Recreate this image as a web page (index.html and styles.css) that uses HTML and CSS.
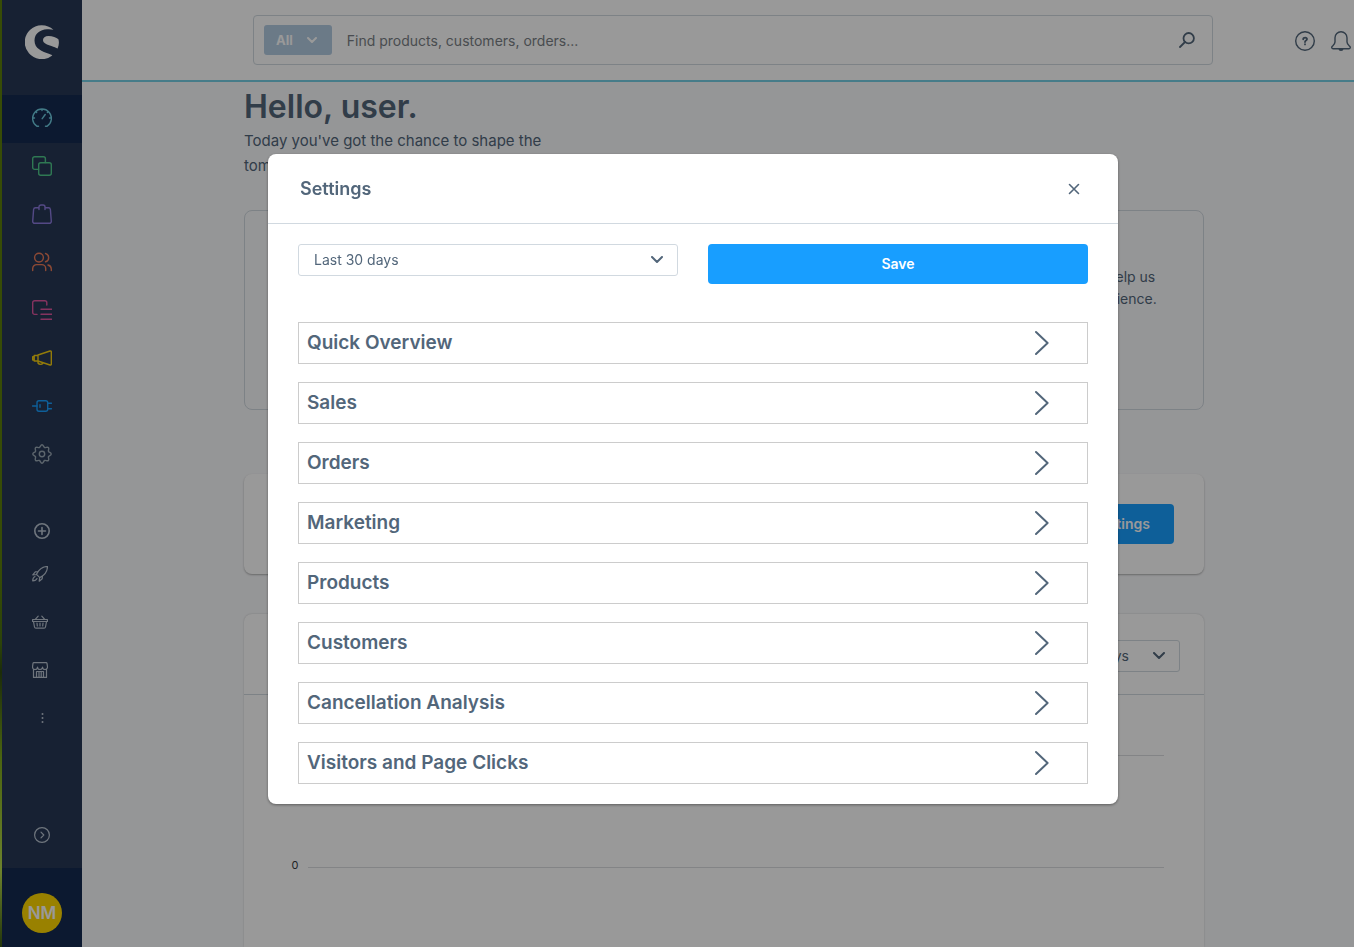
FILE: index.html
```
<!DOCTYPE html>
<html lang="en">
<head>
<meta charset="utf-8">
<title>Dashboard</title>
<link rel="stylesheet" href="styles.css">
</head>
<body>
<div class="app">
  <aside class="sidebar">
    <div class="brand">
      <svg width="34" height="34" viewBox="0 0 34 34"><path d="M28.400 4.800A17 17 0 1 0 27.300 30.500C27 30 26.200 29.700 24.500 29C17 26.500 9.500 23.500 9.500 15.500C9.500 8.500 15 4.800 22 4.300C24.500 4.100 26.700 4.300 28.400 4.800Z"/><path d="M33.400 14.200C31.300 12.300 27.600 10.900 23.500 10.900C20 10.900 18 12.600 18 15C18 18.600 22.500 19.600 26.400 20.900C29 21.800 31 22.600 32.600 23.500C34 20.500 34.300 17.400 33.400 14.200Z"/></svg>
    </div>
    <nav class="nav" aria-label="Main">
      <a class="nav-item active" href="#" aria-label="Dashboard"><svg class="icon cyan" viewBox="0 0 20 20"><path d="M6.500 18.200H4.800A9.400 9.400 0 1 1 15.200 18.200H13.500M10.200 10.700L13.200 6.500M10 1v1.500M1 10h1.500M19 10h-1.500M3.600 3.600l1 1M16.400 3.600l-1 1"/></svg></a>
      <a class="nav-item" href="#" aria-label="Catalogues"><svg class="icon green" viewBox="0 0 20 20"><path d="M6.500 13.400H2.700a2 2 0 0 1-2-2V2.700a2 2 0 0 1 2-2h8.700a2 2 0 0 1 2 2v3.800"/><rect x="6.700" y="6.700" width="12.600" height="12.600" rx="2"/></svg></a>
      <a class="nav-item" href="#" aria-label="Orders"><svg class="icon purple" viewBox="0 0 20 20"><path d="M7 3.700H3.600a2 2 0 0 0-2 1.800L.7 17.200a2 2 0 0 0 2 2.100h14.600a2 2 0 0 0 2-2.100L18.400 5.500a2 2 0 0 0-2-1.800H13M7 5.500V3a2 2 0 0 1 2-2h2a2 2 0 0 1 2 2v2.500"/></svg></a>
      <a class="nav-item" href="#" aria-label="Customers"><svg class="icon coral" viewBox="0 0 20 20"><circle cx="7" cy="5.600" r="4.400"/><path d="M.7 18.600v-2a4 4 0 0 1 4-4h5a4 4 0 0 1 4 4v2M13.500 1.500a4.300 4.300 0 0 1 0 8.300M16 13a4.200 4.200 0 0 1 3.300 4v1.600"/></svg></a>
      <a class="nav-item" href="#" aria-label="Content"><svg class="icon pink" viewBox="0 0 20 20"><path d="M5 14.400H2.700a2 2 0 0 1-2-2V2.700a2 2 0 0 1 2-2h10.100a2 2 0 0 1 2 2V5M9 9.300h11M9 14.300h11M9 19.300h11"/></svg></a>
      <a class="nav-item" href="#" aria-label="Marketing"><svg class="icon yellow" viewBox="0 0 20 20"><path d="M6 7L18 3a1 1 0 0 1 1.300 1v12a1 1 0 0 1-1.300 1L6 13zM6 7.500H2.200V13H6M2 8.700H.7v3.300H2M6 13v2a3 3 0 0 0 5 0"/></svg></a>
      <a class="nav-item" href="#" aria-label="Extensions"><svg class="icon blue" viewBox="0 0 20 20"><path d="M.5 10H5M8 8.800v2.400M15.800 7.300h3.700M15.800 12.700h3.700"/><rect x="5" y="4.700" width="10.700" height="10.600" rx="2"/></svg></a>
      <a class="nav-item" href="#" aria-label="Settings"><svg class="icon grey" viewBox="0 0 20 20"><path d="M10 .8c1.500 0 1.400 2.200 2.600 2.700s2.700-1 3.800.1-.4 2.600.1 3.800 2.700 1.100 2.700 2.600-2.200 1.400-2.700 2.600 1 2.700-.1 3.800-2.600-.4-3.800.1-1.100 2.700-2.600 2.700-1.400-2.200-2.600-2.700-2.700 1-3.800-.1.400-2.600-.1-3.800S.8 11.500.8 10s2.200-1.400 2.700-2.600-1-2.700.1-3.800 2.600.4 3.800-.1S8.500.8 10 .8z"/><circle cx="10" cy="10" r="2.700"/></svg></a>
    </nav>
    <nav class="shop-nav" aria-label="Sales channels">
      <button class="shop-item first" aria-label="Add sales channel"><svg class="icon-s bold" viewBox="0 0 16 16"><circle cx="8" cy="8" r="7.200"/><path d="M8 4.500v7M4.500 8h7"/></svg></button>
      <a class="shop-item shifted" href="#" aria-label="Launch"><svg class="icon-s" viewBox="0 0 16 16"><path d="M15.500.5C10.500.6 7 3 4.500 8.300L7.800 11.600C13 9 15.400 5.500 15.500.5zM6 5.500L3.300 5.800.8 8.900l3.700-.4M10.500 10l-.3 2.700-3 2.500.5-3.700M3 10.500c-1.500.6-2.200 2-2.300 4.300 2.300 0 3.700-.8 4.300-2.200"/></svg></a>
      <a class="shop-item shifted" href="#" aria-label="Storefront"><svg class="icon-s" viewBox="0 0 16 16"><path d="M.6 5.500h14.800v2H.6zM1.500 7.500l1 5.500a1.500 1.500 0 0 0 1.500 1.200h8a1.500 1.500 0 0 0 1.500-1.200l1-5.500M3.300 5.300L6.200 2.200M12.700 5.300L9.800 2.200M5 9l.3 3M8 9v3M11 9l-.3 3"/></svg></a>
      <a class="shop-item shifted" href="#" aria-label="Market"><svg class="icon-s" viewBox="0 0 16 16"><path d="M1.500 7v8.400h13V7M2 .6h12a1 1 0 0 1 1 .8l.5 3.600a2.500 2.500 0 0 1-5 0 2.500 2.500 0 0 1-5 0 2.500 2.500 0 0 1-5 0L1 1.400A1 1 0 0 1 2 .6zM4.500 15V9.500h7V15M7 9.500V15M9.200 9.500V15"/></svg></a>
      <button class="shop-item" aria-label="More"><svg class="icon-s dots" viewBox="0 0 16 16"><circle cx="8.500" cy="4" r="1"/><circle cx="8.500" cy="8" r="1"/><circle cx="8.500" cy="12" r="1"/></svg></button>
    </nav>
    <button class="collapse" aria-label="Expand menu"><svg class="icon-s" viewBox="0 0 16 16"><circle cx="8" cy="8" r="7.400"/><path d="M7 5.200L9.800 8 7 10.800"/></svg></button>
    <div class="user"><button class="avatar">NM</button></div>
  </aside>

  <div class="page">
    <header class="topbar">
      <form class="search" role="search">
        <button class="scope" type="button">All <svg width="10" height="6" viewBox="0 0 10 6"><path d="M1 1l4 4 4-4"/></svg></button>
        <input class="search-input" type="text" aria-label="Search" placeholder="Find products, customers, orders...">
        <svg class="search-icon" width="16" height="16" viewBox="0 0 16 16"><circle cx="9.700" cy="6.200" r="5.200"/><path d="M6 10L1 15"/></svg>
      </form>
      <div class="actions">
        <button class="plain" aria-label="Help"><svg class="icon dark" viewBox="0 0 20 20"><circle cx="10" cy="10" r="9.300"/><path class="mark" d="M8.200 8.300C8.200 6 12 6 12 8.300 12 9.700 10 9.500 10 11M10 13.200v.2"/></svg></button>
        <button class="plain" aria-label="Notifications"><svg class="icon dark" viewBox="0 0 20 20"><path d="M10 .7a6 6 0 0 1 6 6V11c0 2 1.300 3 2.700 4.300 1 1 .6 2.400-.8 2.400H2.100c-1.400 0-1.800-1.400-.8-2.400C2.700 14 4 13 4 11V6.700a6 6 0 0 1 6-6zM8 18c.3 1.700 3.700 1.700 4 0"/></svg></button>
      </div>
    </header>
    <main class="content">
      <h1 class="hello">Hello, user.</h1>
      <p class="intro">Today you've got the chance to shape the tomorrow.</p>
      <section class="card feedback"><p class="feedback-text">can help us<br>experience.</p></section>
      <section class="card toolbar"><button class="primary">Settings</button></section>
      <section class="card chart">
        <div class="chart-head">
          <span class="select-wrap range"><select class="select" aria-label="Chart range"><option>30 days</option></select><svg class="caret" width="12" height="8" viewBox="0 0 12 8"><path d="M1 1l5 5 5-5"/></svg></span>
        </div>
        <div class="plot">
          <div class="tick"><span class="tick-label"></span><span class="tick-line"></span></div>
          <div class="tick"><span class="tick-label">0</span><span class="tick-line"></span></div>
        </div>
      </section>
    </main>
  </div>
</div>

<div class="overlay">
  <div class="modal" role="dialog" aria-modal="true" aria-labelledby="modal-title">
    <header class="modal-head">
      <h2 class="modal-title" id="modal-title">Settings</h2>
      <button class="plain close" aria-label="Close"><svg width="12" height="12" viewBox="0 0 12 12"><path d="M1.500 1.500l9 9M10.500 1.500l-9 9"/></svg></button>
    </header>
    <div class="modal-body">
      <div class="controls">
        <span class="select-wrap"><select class="select" aria-label="Date range"><option>Last 30 days</option></select><svg class="caret" width="12" height="8" viewBox="0 0 12 8"><path d="M1 1l5 5 5-5"/></svg></span>
        <button class="primary">Save</button>
      </div>
      <div class="groups">
        <button class="group">Quick Overview<svg class="chevron" viewBox="0 0 14 26"><path d="M1 2L12.600 13 1 24"/></svg></button>
        <button class="group">Sales<svg class="chevron" viewBox="0 0 14 26"><path d="M1 2L12.600 13 1 24"/></svg></button>
        <button class="group">Orders<svg class="chevron" viewBox="0 0 14 26"><path d="M1 2L12.600 13 1 24"/></svg></button>
        <button class="group">Marketing<svg class="chevron" viewBox="0 0 14 26"><path d="M1 2L12.600 13 1 24"/></svg></button>
        <button class="group">Products<svg class="chevron" viewBox="0 0 14 26"><path d="M1 2L12.600 13 1 24"/></svg></button>
        <button class="group">Customers<svg class="chevron" viewBox="0 0 14 26"><path d="M1 2L12.600 13 1 24"/></svg></button>
        <button class="group">Cancellation Analysis<svg class="chevron" viewBox="0 0 14 26"><path d="M1 2L12.600 13 1 24"/></svg></button>
        <button class="group">Visitors and Page Clicks<svg class="chevron" viewBox="0 0 14 26"><path d="M1 2L12.600 13 1 24"/></svg></button>
      </div>
    </div>
  </div>
</div>
</body>
</html>
```
FILE: styles.css
```
* { box-sizing: border-box; }
body { margin: 0; font-family: Inter, "Liberation Sans", sans-serif; font-size: 14px; color: #52667a; }
button, input, select { font: inherit; }
button { cursor: pointer; }
h1, h2, p { margin: 0; }
svg { display: block; flex: none; fill: none; stroke: currentColor; stroke-linecap: round; stroke-linejoin: round; }

.app { display: flex; min-height: 100vh; background: linear-gradient(#5c7f0a 0 60%, #4a7010 68%, #2f4a10 71%, #7da81c 80%, #b5d94a 92%, #3b5a12); padding-left: 2px; }

/* Sidebar */
.sidebar { width: 80px; flex: none; display: flex; flex-direction: column; background: #273856; }
.brand { display: flex; justify-content: center; padding: 25px 0 36px; }
.brand svg { fill: #fff; stroke: none; }
.nav-item { display: flex; height: 48px; padding-bottom: 2px; align-items: center; justify-content: center; }
.nav-item.active { background: #142b51; }
.icon { width: 20px; height: 20px; stroke-width: 1.4; }
.icon-s { width: 16px; height: 16px; stroke-width: 1.2; }
.icon-s.bold { stroke-width: 1.6; }
.icon-s.dots { fill: currentColor; stroke: none; }
.cyan { color: #6ecbe0; }
.green { color: #4fc98a; }
.purple { color: #8d7be0; }
.coral { color: #ec7b58; }
.pink { color: #e0559f; }
.yellow { color: #f5cd10; }
.blue { color: #189eff; }
.grey { color: #9aa8b5; }
.dark { color: #52667a; }
.mark { stroke-width: 1.8; }
.shop-nav { display: flex; flex-direction: column; padding-top: 32px; color: #b9c4d1; }
.shop-item { display: flex; height: 48px; padding: 0 0 2px; align-items: center; justify-content: center; background: none; border: 0; color: inherit; }
.shop-item.first { height: 40px; padding-bottom: 0; }
.shop-item.shifted { padding-right: 4px; }
.collapse { display: flex; justify-content: center; margin-top: auto; padding: 0 0 25px; background: none; border: 0; color: #b9c4d1; }
.user { display: flex; justify-content: center; padding: 25px 0 14px; background: #142b51; }
.avatar { width: 40px; height: 40px; padding: 0; border: 0; border-radius: 50%; background: #ffd800; color: #fff; font-size: 17px; font-weight: 600; }

/* Page */
.page { flex: 1; min-width: 0; display: flex; flex-direction: column; background: #f9fafc; }
.topbar { display: flex; height: 82px; align-items: center; background: #fff; border-bottom: 2px solid #76cfe5; flex: none; }
.search { display: flex; flex: 1; max-width: 960px; height: 50px; margin-left: 171px; padding: 0 17px 0 10px; align-items: center; border: 1px solid #d1d9e0; border-radius: 4px; }
.scope { display: flex; gap: 14px; height: 30px; padding: 0 15px 0 12px; align-items: center; border: 0; border-radius: 3px; background: #b3cbe2; color: #fff; font-size: 13px; font-weight: 700; }
.scope svg { stroke-width: 2; }
.search-input { flex: 1; min-width: 0; padding: 0 15px; border: 0; outline: 0; background: none; color: #52667a; }
.search-input::placeholder { color: #7a7f85; opacity: 1; }
.search-icon { color: #52667a; stroke-width: 1.8; }
.actions { display: flex; gap: 16px; margin-left: auto; padding: 2px 3px 0 0; }
.plain { padding: 0; border: 0; background: none; color: #52667a; }
.content { flex: 1; display: flex; flex-direction: column; width: 100%; max-width: 972px; margin: 0 auto; padding-left: 12px; }
.hello { padding-top: 5px; font-size: 32px; line-height: 40px; font-weight: 600; }
.intro { max-width: 300px; margin-top: 1px; font-size: 15px; line-height: 25px; }
.card { border-radius: 8px; background: #fff; }
.feedback { height: 200px; margin-top: 32px; padding: 55px 40px 0; border: 1px solid #d1d9e0; background: #f9fafc; }
.feedback-text { width: 84px; margin-left: auto; line-height: 22px; white-space: nowrap; }
.toolbar { display: flex; justify-content: flex-end; margin-top: 64px; padding: 30px; box-shadow: 0 1px 2px rgba(0,0,0,.3); }
.primary { height: 40px; padding: 0 24px 2px; border: 0; border-radius: 4px; background: #189eff; color: #fff; font-weight: 600; }
.chart { flex: 1; margin-top: 40px; border-radius: 8px 8px 0 0; box-shadow: 0 0 2px rgba(0,0,0,.2); }
.chart-head { display: flex; justify-content: flex-end; padding: 26px 24px 22px; border-bottom: 1px solid #d1d9e0; }
.select-wrap { position: relative; display: block; }
.select-wrap.range { width: 120px; }
.select { display: block; width: 100%; height: 32px; padding: 0 15px 2px; appearance: none; border: 1px solid #d1d9e0; border-radius: 3px; background: #fff; color: #52667a; outline: 0; }
.caret { position: absolute; right: 15px; top: 12px; stroke-width: 2; color: #52667a; pointer-events: none; }
.plot { display: grid; gap: 92px; padding: 50px 40px 0 46px; }
.tick { display: flex; height: 20px; gap: 8px; align-items: center; font-size: 11px; }
.tick-label { width: 10px; padding-bottom: 4px; text-align: center; color: #373d3f; }
.tick-line { flex: 1; border-top: 1px solid #dadde0; }

/* Modal */
.overlay { position: fixed; inset: 0; display: flex; align-items: center; justify-content: center; padding: 11px 0 0 32px; background: rgba(0,0,0,.4); }
.modal { width: 850px; max-width: 100%; border-radius: 8px; background: #fff; box-shadow: 0 1px 3px rgba(0,0,0,.4); }
.modal-head { display: flex; height: 70px; padding: 0 38px 0 32px; align-items: center; justify-content: space-between; border-bottom: 1px solid #d1d9e0; }
.modal-title { font-size: 18px; font-weight: 600; }
.close svg { stroke-width: 1.6; }
.modal-body { padding: 20px 30px; }
.controls { display: grid; grid-template-columns: 1fr 1fr; gap: 30px; margin-bottom: 38px; }
.groups { display: grid; gap: 18px; }
.group { display: flex; height: 42px; padding: 0 38px 2px 8px; align-items: center; justify-content: space-between; border: 1px solid #ccc; background: #fff; color: #52667a; font-size: 19px; font-weight: 600; }
.chevron { width: 14px; height: 26px; margin-top: 2px; stroke-width: 2; }
```
